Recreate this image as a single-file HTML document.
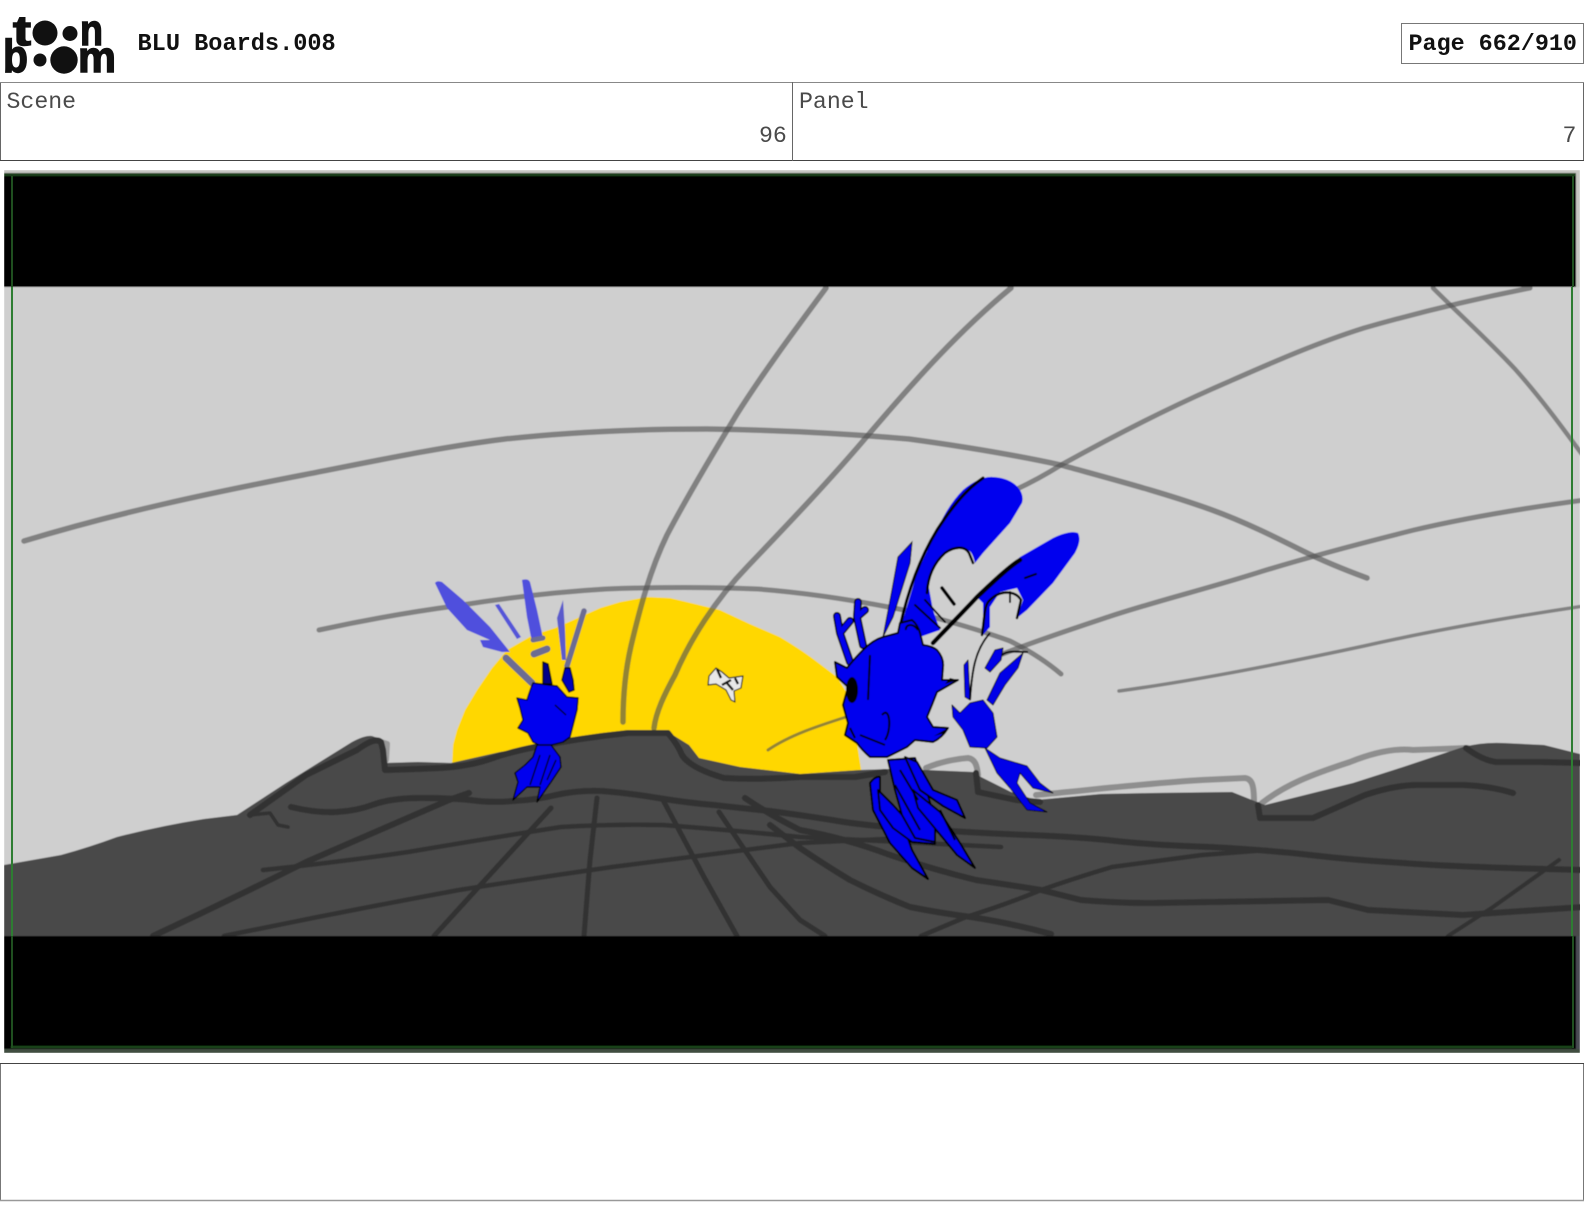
<!DOCTYPE html>
<html><head><meta charset="utf-8"><title>BLU Boards.008</title>
<style>
html,body{margin:0;padding:0;background:#fff;width:1584px;height:1224px;overflow:hidden}
svg{position:absolute;left:0;top:0;display:block}
.m{font-family:"Liberation Mono",monospace}
</style></head><body>
<svg width="1584" height="1224" viewBox="0 0 1584 1224" xmlns="http://www.w3.org/2000/svg">
<defs>
<filter id="s" x="-2%" y="-2%" width="104%" height="104%"><feGaussianBlur stdDeviation="0.5"/></filter>
<clipPath id="c"><rect x="4" y="170" width="1576" height="883"/></clipPath>
</defs>
<rect width="1584" height="1224" fill="#fff"/>

<!-- logo -->
<g fill="#111">
<circle cx="45" cy="33" r="12.5"/><circle cx="70" cy="33.5" r="7.5"/>
<circle cx="40" cy="60" r="6.5"/><circle cx="64" cy="60" r="13.7"/>
<g font-family="'Liberation Sans',sans-serif" font-weight="700" stroke="#111" stroke-width="1.4">
<text x="13" y="45" font-size="42" textLength="18" lengthAdjust="spacingAndGlyphs">t</text>
<text x="80" y="45" font-size="44" textLength="23" lengthAdjust="spacingAndGlyphs">n</text>
<text x="3" y="72" font-size="46" textLength="25" lengthAdjust="spacingAndGlyphs">b</text>
<text x="78" y="72" font-size="44" textLength="38" lengthAdjust="spacingAndGlyphs">m</text>
</g></g>

<!-- header text -->
<text class="m" x="137.5" y="50" font-size="23.6" font-weight="700" fill="#111">BLU Boards.008</text>
<rect x="1401.5" y="23.5" width="182" height="40" fill="#fff" stroke="#777" stroke-width="1"/>
<text class="m" x="1408.5" y="50" font-size="23.4" font-weight="700" fill="#111">Page 662/910</text>

<!-- scene / panel -->
<rect x="0.5" y="82.5" width="1583" height="78" fill="#fff" stroke="#666" stroke-width="1"/>
<line x1="0" y1="82.5" x2="1584" y2="82.5" stroke="#888"/>
<line x1="0" y1="160.5" x2="1584" y2="160.5" stroke="#444"/>
<line x1="792.5" y1="82" x2="792.5" y2="161" stroke="#666"/>
<text class="m" x="6.5" y="108" font-size="23.2" fill="#4a4a4a">Scene</text>
<text class="m" x="799" y="108" font-size="23.2" fill="#4a4a4a">Panel</text>
<text class="m" x="759" y="142" font-size="23.2" fill="#4a4a4a">96</text>
<text class="m" x="1562.5" y="142" font-size="23.2" fill="#4a4a4a">7</text>

<!-- frame art -->
<g clip-path="url(#c)"><g filter="url(#s)">
<rect x="4" y="170" width="1576" height="883" fill="#c6c6c2"/>
<rect x="4" y="287" width="1576" height="650" fill="#cfcfcf"/>

<!-- sun -->
<path d="M452 765 L453 745 L457 730 L465 710 L477 690 L492 668 L507 650 L533 635 L555 628 L580 617 L600 608 L620 602 L647 597 L670 598 L687 602 L720 610 L750 624 L780 637 Q802 650 820 664 L837 677 L847 693 L855 730 L862 775 L700 790 L452 790Z" fill="#ffd700"/>

<!-- sky lines -->
<g fill="none" stroke="#555" stroke-opacity=".64" stroke-width="5" stroke-linecap="round" stroke-linejoin="round">
<path stroke-width="5.5" d="M24 541 C120 512 210 493 303 475 C370 462 440 447 505 439 C570 432 640 429 707 429 C780 430 850 434 909 439 C960 446 1015 455 1061 465 C1115 480 1165 493 1212 510 C1245 522 1275 537 1303 551 C1325 562 1348 571 1367 578"/>
<path d="M319 630 C365 620 410 612 455 606 C505 598 555 592 606 589 C660 587 710 587 758 589 C810 593 860 601 909 611 C945 620 980 630 1010 641 C1030 651 1047 662 1061 674"/>
<path stroke-width="5.5" d="M826 288 C795 330 765 370 737 414 C712 455 688 495 667 535 C650 570 640 608 631 646 C625 672 623 700 623 722"/>
<path stroke-width="5.5" d="M1011 288 C960 330 915 380 869 434 C830 480 790 522 748 566 C715 600 690 640 675 675 C664 695 656 712 654 728"/>
<path stroke-width="4.5" d="M1433 288 C1460 315 1488 340 1515 369 C1540 397 1562 427 1584 457"/>
<path d="M1530 288 C1480 298 1420 312 1364 328 C1310 345 1260 368 1212 389 C1160 412 1110 438 1061 465 C1045 475 1030 483 1015 490"/>
<path d="M1584 500 C1525 508 1465 518 1414 530 C1362 543 1312 556 1263 571 C1210 588 1160 600 1111 616 C1075 628 1035 641 1000 655"/>
<path stroke-width="3.5" d="M1584 606 C1510 617 1435 630 1364 646 C1285 663 1200 680 1119 691"/>
<path stroke-width="3" d="M768 750 C790 735 818 726 846 717"/>
</g>
<!-- lighter contour behind ground -->
<g fill="none" stroke="#8e8e8e" stroke-width="6" stroke-linecap="round" stroke-linejoin="round">
<path d="M926 768 C940 762 955 759 968 758 C975 759 977 765 978 775"/>
<path d="M1036 795 C1090 790 1150 783 1202 780 L1245 778 C1252 779 1254 785 1254 802"/>
<path d="M1262 803 C1285 785 1310 775 1350 762 C1375 752 1395 748 1413 750 L1468 748"/>
<path stroke="#999" d="M375 740 L387 744 L386 760"/>
</g>

<!-- ground -->
<path d="M4 865 L61 855 Q90 847 117 837 Q160 826 204 819 L237 815 L286 783 L352 742 Q365 735 372 736 L383 740 L385 763 L418 762 L451 763 L500 752 L561 742 L622 732 L668 732 L689 745 L699 758 L740 767 L800 774 L860 770 L890 769 L926 770 L973 772 L981 777 L1011 792 L1036 800 L1101 794 L1152 793 L1232 792 L1252 800 L1265 805 L1353 783 L1403 767 L1463 747 Q1483 742 1503 743 L1544 745 L1580 754 L1580 937 L4 937Z" fill="#484848"/>

<!-- ground lines -->
<g fill="none" stroke="#323232" stroke-width="6" stroke-linecap="round" stroke-linejoin="round">
<path d="M250 815 L306 775 L357 750 C368 742 376 738 381 742 L383 750 L385 770 Q420 769 440 768 Q470 766 490 759 Q510 752 535 747 Q580 738 628 733 L668 733 Q678 745 682 755 Q690 768 724 778 Q760 780 800 777 L855 777 L885 772"/>
<path d="M976 773 L978 792 L1016 800 L1040 802"/>
<path d="M1258 805 L1260 818 L1313 818 Q1340 806 1365 795 Q1395 785 1418 785 L1463 785 Q1490 786 1513 793"/>
<path d="M1466 748 Q1482 760 1496 762 L1540 762 L1584 763"/>
<path d="M291 807 Q316 813 336 812 Q357 811 375 804 Q393 798 421 798 Q449 798 470 800 Q490 803 513 801 Q536 800 556 795 Q577 790 602 791 Q628 793 658 798 Q689 803 714 805 Q740 808 770 811 Q800 815 832 820 Q865 826 920 829 Q976 833 1028 835 Q1081 837 1116 841 Q1152 845 1210 847 Q1267 850 1310 855 Q1353 860 1403 863 Q1453 867 1584 870"/>
<path stroke-width="3.5" d="M250 815 L270 813 L278 825 L288 827"/>
<path stroke-width="6" d="M153 936 Q230 900 306 862 Q380 830 449 800 L469 793"/>
<path stroke-width="4.5" d="M263 870 Q340 862 408 852 Q490 838 561 827 Q612 824 663 825 Q730 830 800 837 L1001 847"/>
<path stroke-width="4.5" d="M224 936 Q340 912 459 890 Q535 878 612 867 L800 843 L885 839"/>
<path stroke-width="5" d="M434 936 L485 880 L551 808"/>
<path stroke-width="5" d="M584 936 L590 860 L597 798"/>
<path stroke-width="5" d="M737 936 L704 877 L663 800"/>
<path stroke-width="5" d="M719 812 L740 843 L770 887 L800 920 L825 936"/>
<path d="M745 798 Q770 815 800 830 Q845 838 890 855 Q935 870 976 880 Q1010 885 1041 890 L1081 900 Q1115 903 1152 903 L1328 900 L1368 910 L1463 915 L1584 907"/>
<path d="M770 825 L800 848 Q825 865 850 880 Q880 895 910 907 Q940 913 971 917 Q1010 923 1051 934"/>
<path stroke-width="4.5" d="M921 936 L966 917 Q1005 905 1041 890 Q1075 878 1112 867 L1202 855 L1267 850"/>
<path stroke-width="4" d="M1448 936 L1493 907 L1559 860"/>
</g>

<!-- small bee wings -->
<g>
<path d="M435 583 Q437 580 442 582 L463 600 L490 627 L510 652 L502 652 L483 647 L480 640 L490 640 L467 630 L447 608Z" fill="#4f4fdd"/>
<path d="M495 605 L499 604 L521 637 L517 639Z" fill="#5555d8"/>
<path d="M522 580 Q528 578 530 582 L537 610 L543 638 L532 642 L527 617Z" fill="#5050dd"/>
<path d="M563 600 L557 618 L562 660 L566 660 L565 630Z" fill="#5a5acc"/>
<g fill="none" stroke="#6c6c92" stroke-linecap="round">
<path stroke-width="7" d="M506 658 L532 683"/>
<path stroke-width="7" d="M534 654 L547 649"/>
<path stroke-width="5" d="M533 640 L543 638"/>
<path stroke-width="5.5" d="M584 611 L567 666"/>
</g>
</g>

<!-- small bee body -->
<g stroke="#000" stroke-width="1.4" stroke-linejoin="round" fill="#0000ee">
<path d="M543 662 L548 664 L552 684 L543 684Z" fill="#000088" stroke="#000"/>
<path d="M565 668 L570 668 L573 680 L574 690 L569 692 L562 680Z" fill="#0000bb" stroke="#000"/>
<path d="M517 698 L527 700 Q530 690 533 683 L557 686 L567 697 L578 698 L577 710 L570 737 L563 742 L543 747 L533 742 L528 733 L518 728 L523 720 L520 708Z"/>
<path d="M537 745 L551 745 L560 757 L561 767 L551 782 L537 802 L540 787 L527 787 L513 800 L518 782 L515 773 L525 765 L533 757Z"/>
<path fill="none" d="M540 755 L530 785 M550 755 L540 785 M556 760 L547 780 M555 705 L566 715"/>
</g>

<!-- tiny figure -->
<g stroke-linejoin="round">
<path d="M709 676 L716 668 L722 672 L729 678 L743 676 L741 688 L734 691 L735 702 L731 700 L726 690 L716 684 L708 685Z" fill="#e8e8e8" stroke="#222" stroke-width="1.2"/>
<path d="M717 669 L721 678 M726 682 L733 690 M722 685 L731 680 M735 678 L738 684" stroke="#111" stroke-width="2.4" fill="none"/>
</g>

<!-- big bee wings -->
<path d="M902 623 L917 573 L937 530 Q948 505 963 490 Q980 476 993 477 Q1012 478 1020 490 Q1024 497 1022 503 L1010 523 L983 553 L975 563 Q972 550 967 550 Q955 545 945 553 Q930 565 928 583 L933 610 L940 630 L920 637Z" fill="#0000ee"/>
<path d="M883 637 L892 590 L898 557 L912 542 L910 563 L893 617Z" fill="#0000ee" stroke="#000" stroke-width="1"/>
<path d="M977 597 L1020 557 L1053 538 Q1070 530 1078 533 Q1082 540 1075 553 L1053 583 L1027 610 L1017 618 L1023 600 L1017 588 L1000 592 L990 607 L990 627 L983 635 L983 603Z" fill="#0000ee"/>
<g fill="none" stroke="#000" stroke-linecap="round" stroke-linejoin="round">
<path stroke-width="3" d="M900 627 C908 590 920 558 937 530 C950 510 965 490 983 478"/>
<path stroke-width="2.5" d="M927 593 C928 575 935 562 945 553 C955 546 965 546 969 553 L973 563"/>
<path stroke-width="4.5" d="M933 643 C950 625 965 610 977 597 C995 580 1010 566 1020 560"/>
<path stroke-width="2.5" d="M982 635 C985 615 984 605 990 600 C1000 590 1015 590 1021 600 L1017 618"/>
<path stroke-width="3.5" d="M942 588 L954 604"/>
<path stroke-width="2" d="M1025 578 L1036 574 M1010 592 L1010 602 M915 605 L940 628 M925 600 L945 622"/>
</g>

<!-- big bee body -->
<g stroke="#000" stroke-width="2" stroke-linejoin="round" fill="#0000ee">
<g fill="none" stroke-linecap="round">
<path stroke="#000" stroke-width="8" d="M863 645 L857 617 L858 602 M857 617 L865 610 M850 662 L840 633 L850 621 M840 633 L837 616"/>
<path stroke="#0000ee" stroke-width="5" d="M863 645 L857 617 L858 602 M857 617 L865 610 M850 662 L840 633 L850 621 M840 633 L837 616"/>
</g>
<path d="M870 783 Q875 776 880 777 L880 793 L895 812 L905 830 L912 850 L928 879 L912 868 L890 843 L873 810Z"/>
<path d="M878 790 L893 805 L912 826 L935 838 L935 844 L912 842 L893 828 L880 810Z"/>
<path d="M888 760 L915 758 L925 785 L935 820 L935 842 L915 838 L902 815 L895 790Z"/>
<path d="M905 757 L917 762 L933 790 L957 800 L965 818 L943 806 L920 790Z"/>
<path d="M913 790 L940 812 L960 843 L975 868 L957 855 L938 832 L918 808Z"/>
<path d="M835 662 L847 668 Q855 658 863 650 Q873 640 883 637 L898 633 L900 623 L912 620 Q918 625 920 633 L923 645 Q932 646 937 650 Q944 658 943 667 L942 680 L958 680 L937 692 Q932 705 927 717 L933 727 L948 728 Q942 738 933 742 L915 740 L907 747 L887 757 L870 757 Q862 750 857 743 L845 735 L848 723 L843 705 L848 687 L837 677Z"/>
<path fill="none" d="M906 630 C905 625 912 622 918 630 M870 655 L868 700 M882 715 C890 705 892 730 885 740 M860 735 L885 745 M900 770 L918 800 M895 785 L920 830 M940 810 L955 840 M850 728 L855 738"/>
</g>
<ellipse cx="852" cy="690" rx="6" ry="13" fill="#000"/>
<path d="M948 728 L934 736 L945 733Z" fill="#000"/>
<path d="M958 680 L945 684 L950 678Z" fill="#000"/>

<!-- small far bee -->
<g fill="#0000e8" stroke="#001" stroke-width="1" stroke-linejoin="round">
<path d="M952 705 L960 713 L970 703 L983 700 L993 713 L997 737 L987 748 L970 747 L963 730 L953 717Z"/>
<path d="M985 748 L1000 758 L1027 766 L1040 783 L1053 793 L1033 788 L1020 773 L1017 783 L1030 803 L1047 812 L1027 810 L1010 788 L997 773Z"/>
<path d="M987 700 L1000 673 L1023 653 L1018 668 L1005 685 L993 705Z"/>
<path d="M985 668 L995 650 L1003 648 L1001 660 L990 672Z"/>
<path d="M965 697 L964 665 L968 660 L970 700Z"/>
</g>
<path d="M970 700 C972 670 975 650 990 633 M1002 655 C1008 650 1016 652 1028 652" fill="none" stroke="#000" stroke-width="2"/>

<!-- black letterbox -->
<rect x="4" y="173" width="1572" height="114" fill="#000"/>
<rect x="4" y="936" width="1572" height="114" fill="#000"/>
<rect x="1576" y="936" width="4" height="116" fill="#4a4c52"/>
<rect x="4" y="1049" width="1576" height="4" fill="#3f4d3f"/>
<rect x="4" y="173" width="1572" height="3" fill="#1b3f1b"/>
<rect x="11" y="1046" width="1561" height="2" fill="#1d4a1d"/>
</g></g>

<!-- frame green lines -->
<rect x="11" y="176" width="2" height="111" fill="#1f4f1f"/>
<rect x="11" y="936" width="2" height="112" fill="#1f4f1f"/>
<rect x="1572" y="176" width="2" height="111" fill="#1f4f1f"/>
<rect x="1572" y="936" width="2" height="112" fill="#1f4f1f"/>
<rect x="11" y="287" width="2" height="649" fill="#2e7d32"/>
<rect x="1571" y="287" width="2" height="649" fill="#2e7d32"/>

<!-- notes box -->
<rect x="0.5" y="1063.5" width="1583" height="137" fill="#fff" stroke="#777" stroke-width="1"/>
<line x1="0" y1="1063.5" x2="1584" y2="1063.5" stroke="#444"/>
<line x1="0" y1="1200.5" x2="1584" y2="1200.5" stroke="#999" stroke-width="1.4"/>
</svg>
</body></html>
